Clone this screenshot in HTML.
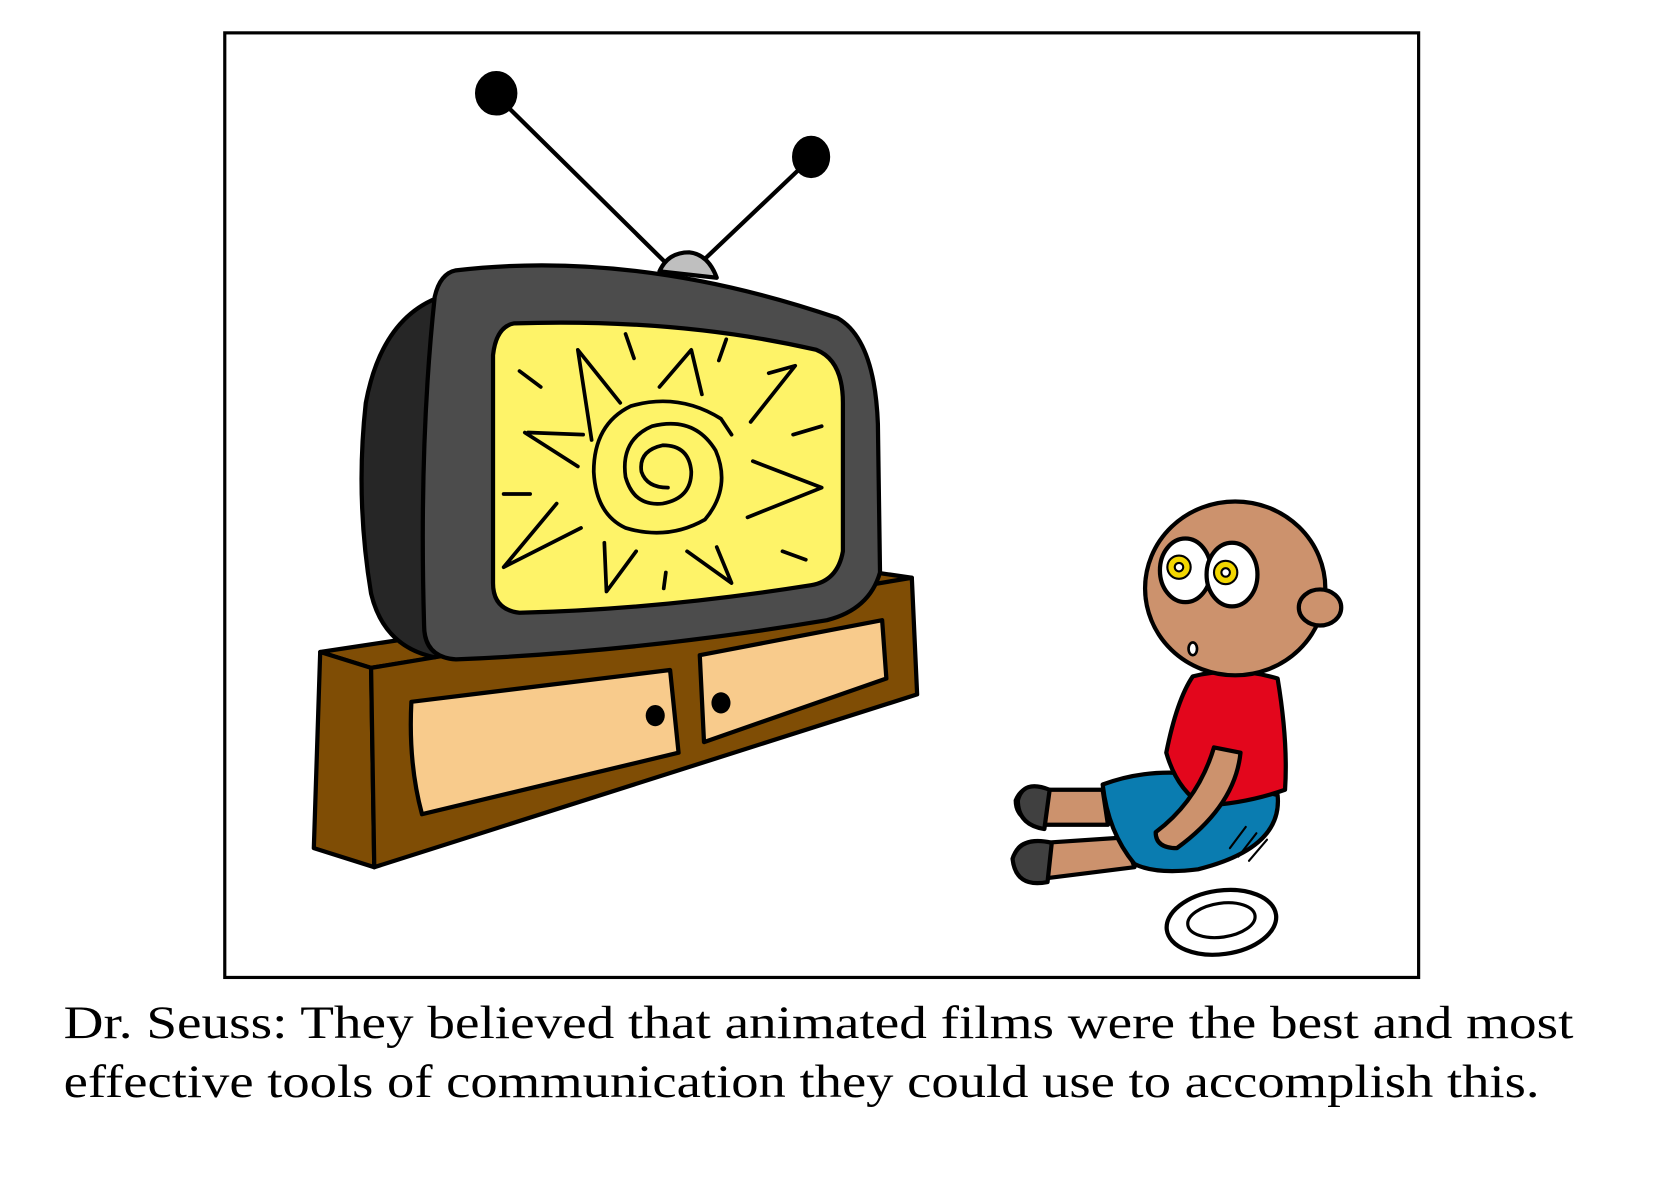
<!DOCTYPE html>
<html><head><meta charset="utf-8"><style>html,body{margin:0;padding:0;background:#fff;width:1654px;height:1181px;overflow:hidden}</style></head>
<body>
<svg width="1654" height="1181" viewBox="0 0 1560 1114" preserveAspectRatio="none" xmlns="http://www.w3.org/2000/svg">
<rect x="212" y="31" width="1126" height="891" fill="#fff" stroke="#000" stroke-width="3"/>
<g stroke="#000" stroke-width="4" stroke-linecap="round" stroke-linejoin="round">
<line x1="470" y1="92" x2="628" y2="248"/>
<line x1="764" y1="150" x2="664" y2="245"/>
<ellipse cx="468" cy="88" rx="18" ry="19" fill="#000"/>
<ellipse cx="765" cy="148" rx="16" ry="18" fill="#000"/>
<path d="M622 256 Q630 238 650 238 Q668 240 676 262 Z" fill="#bfbfbf"/>
<path d="M302 615 L350 630 L855 548 L860 545 L812 538 Z" fill="#7f4d05"/>
<path d="M302 615 L296 800 L353 818 L350 630 Z" fill="#7f4d05"/>
<path d="M350 630 L860 545 L865 655 L353 818 Z" fill="#7f4d05"/>
<path d="M388 662 L632 632 L640 710 L398 768 Q385 720 388 662 Z" fill="#f8cb8c"/>
<path d="M660 618 L832 585 L836 640 L664 700 Z" fill="#f8cb8c"/>
<ellipse cx="618" cy="675" rx="9" ry="10" fill="#000" stroke="none"/>
<ellipse cx="680" cy="663" rx="9" ry="10" fill="#000" stroke="none"/>
<path d="M415 280 Q360 300 345 380 Q335 470 350 560 Q362 610 410 620 L440 610 L420 280 Z" fill="#262626"/>
<path d="M430 255 Q600 235 790 300 Q825 320 828 400 L830 540 Q820 575 780 585 Q600 615 430 622 Q400 620 400 590 Q395 420 410 280 Q415 258 430 255 Z" fill="#4c4c4c"/>
<path d="M485 305 Q640 300 770 330 Q795 340 795 380 L795 520 Q790 548 765 552 Q620 575 490 578 Q465 575 465 550 L465 335 Q468 308 485 305 Z" fill="#fef368"/>
<g fill="none" stroke-width="3.5">
<path d="M630 460 Q610 460 605 445 Q602 425 625 420 Q650 420 652 445 Q652 470 625 475 Q598 478 590 450 Q585 415 615 402 Q655 392 675 425 Q690 460 665 490 Q630 510 590 498 Q562 485 560 445 Q560 400 595 383 Q640 370 680 395 L690 410"/>
<path d="M558 415 L545 330 L585 380"/><path d="M622 365 L652 330 L662 372"/><path d="M708 398 L750 345 L725 352"/>
<path d="M710 435 L775 460 L705 488"/><path d="M498 408 L550 410"/><path d="M495 408 L545 440"/>
<path d="M548 498 L475 535 L525 475"/><path d="M570 512 L572 558 L600 520"/><path d="M648 520 L690 550 L676 516"/>
<path d="M590 315 L598 338"/><path d="M685 320 L678 340"/><path d="M748 410 L775 402"/><path d="M738 520 L760 528"/><path d="M475 466 L500 466"/><path d="M628 540 L626 555"/><path d="M490 350 L510 365"/>
</g>
<path d="M1040 745 L985 745 Q965 738 958 755 Q958 775 985 778 L1045 778 Z" fill="#cc926d"/>
<path d="M1060 790 L985 795 Q960 790 956 810 Q960 835 990 828 L1070 818 Z" fill="#cc926d"/>
<path d="M990 745 Q965 735 960 755 Q960 778 985 782 Z" fill="#404040"/>
<path d="M992 795 Q962 788 955 810 Q958 838 988 832 Z" fill="#404040"/>
<path d="M1040 740 Q1080 725 1125 730 L1205 750 Q1210 800 1130 820 Q1090 825 1070 815 Q1045 785 1040 740 Z" fill="#0a7cb0"/>
<path d="M1125 638 Q1165 628 1205 640 Q1215 700 1212 745 Q1175 758 1135 760 Q1110 745 1100 710 Q1110 660 1125 638 Z" fill="#e3061c"/>
<path d="M1145 705 L1170 710 Q1165 760 1110 800 Q1090 800 1090 785 Q1130 755 1145 705 Z" fill="#cc926d"/>
<ellipse cx="1165" cy="555" rx="85" ry="82" fill="#cc926d"/>
<ellipse cx="1245" cy="573" rx="20" ry="17" fill="#cc926d"/>
<ellipse cx="1118" cy="538" rx="24" ry="30" fill="#fff"/>
<ellipse cx="1162" cy="542" rx="24" ry="30" fill="#fff"/>
<circle cx="1112" cy="535" r="11" fill="#f2d600" stroke-width="2"/>
<circle cx="1156" cy="540" r="11" fill="#f2d600" stroke-width="2"/>
<circle cx="1112" cy="535" r="4" fill="#fff" stroke-width="2"/>
<circle cx="1156" cy="540" r="4" fill="#fff" stroke-width="2"/>
<ellipse cx="1125" cy="612" rx="4" ry="6" fill="#fff" stroke-width="2.5"/>
<ellipse cx="1152" cy="870" rx="52" ry="30" fill="#fff" transform="rotate(-8 1152 870)"/>
<ellipse cx="1152" cy="868" rx="32" ry="16" fill="#fff" stroke-width="3" transform="rotate(-8 1152 868)"/>
<path d="M1160 800 L1175 780 M1168 808 L1185 786 M1178 812 L1195 792" stroke-width="2"/>
</g>
<g font-family="'Liberation Serif',serif" font-size="44" fill="#000">
<text x="60" y="979" textLength="1424" lengthAdjust="spacingAndGlyphs">Dr. Seuss: They believed that animated films were the best and most</text>
<text x="60" y="1035" textLength="1392" lengthAdjust="spacingAndGlyphs">effective tools of communication they could use to accomplish this.</text>
</g>
</svg>
</body></html>
